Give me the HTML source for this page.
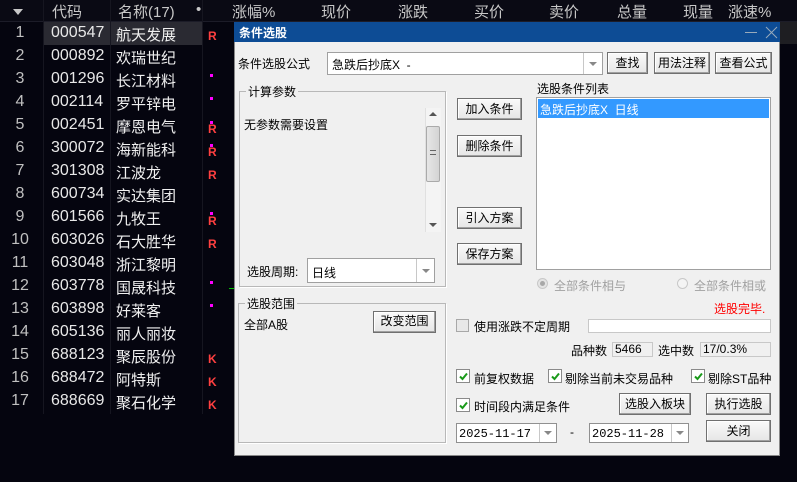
<!DOCTYPE html>
<html><head><meta charset="utf-8">
<style>
*{margin:0;padding:0;box-sizing:border-box}
body{width:797px;height:482px;background:#05050f;position:relative;overflow:hidden;font-family:"Liberation Sans","Noto Sans CJK SC",sans-serif;}
.a{position:absolute;white-space:nowrap}
.hd{color:#c8c8c8;font-size:15px;top:1px}
.rn{color:#c0c0c0;font-size:16px;width:40px;text-align:center;left:0}
.cd{color:#e8e8e8;font-size:16px;left:51px}
.nm{color:#f0f0f0;font-size:15px;left:116px}
.R{color:#ff4040;font-weight:bold;font-size:12px;left:208px}
.m{width:3px;height:3px;background:#ff00ff;left:210px}
.dl{font-size:12px;color:#000}
.btn{position:absolute;background:linear-gradient(#fafafa,#e6e6e6);border:1px solid #707070;box-shadow:inset -1px -1px 0 #a0a0a0,inset 1px 1px 0 #fff;font-size:12px;text-align:center;color:#000}
.box{position:absolute;background:#fff;border:1px solid #a0a0a0}
.arr{position:absolute;top:0;bottom:0;right:0;border-left:1px solid #c8c8c8;background:#fff}
.arr:after{content:"";position:absolute;left:50%;top:50%;margin:-2px 0 0 -4px;border:4px solid transparent;border-top:4px solid #888;border-bottom:0}
.grp{position:absolute;border:1px solid #b8b8b8;box-shadow:1px 1px 0 #fff}
.gl{position:absolute;background:#f0f0f0;font-size:12px;padding:0 2px;top:-9px;left:6px}
.cb{position:absolute;width:14px;height:14px;border:1px solid #8a8a8a;background:#fff}
.cb svg{position:absolute;left:2px;top:2px}
</style></head><body>
<div class="a" style="left:0;top:0;width:797px;height:22px;background:#0a0a14;border-bottom:1px solid #1c1c28"></div>
<div class="a" style="left:13px;top:9px;border:5px solid transparent;border-top:6px solid #c8c8c8;border-bottom:0"></div>
<div class="a hd" style="left:52px">代码</div>
<div class="a hd" style="left:118px">名称(17)</div>
<div class="a hd" style="left:196px">•</div>
<div class="a hd" style="left:232px">涨幅%</div>
<div class="a hd" style="left:321px">现价</div>
<div class="a hd" style="left:398px">涨跌</div>
<div class="a hd" style="left:474px">买价</div>
<div class="a hd" style="left:549px">卖价</div>
<div class="a hd" style="left:617px">总量</div>
<div class="a hd" style="left:683px">现量</div>
<div class="a hd" style="left:728px">涨速%</div>
<div class="a" style="left:44px;top:22px;width:66px;height:23px;background:#2a2a32"></div>
<div class="a" style="left:111px;top:22px;width:91px;height:23px;background:#2a2a32"></div>
<div class="a" style="left:43px;top:0;width:1px;height:414px;background:#161620"></div>
<div class="a" style="left:110px;top:0;width:1px;height:414px;background:#161620"></div>
<div class="a" style="left:202px;top:0;width:1px;height:414px;background:#161620"></div>

<div class="a rn" style="top:24px">1</div><div class="a cd" style="top:24px">000547</div><div class="a nm" style="top:24px">航天发展</div>
<div class="a rn" style="top:47px">2</div><div class="a cd" style="top:47px">000892</div><div class="a nm" style="top:47px">欢瑞世纪</div>
<div class="a rn" style="top:70px">3</div><div class="a cd" style="top:70px">001296</div><div class="a nm" style="top:70px">长江材料</div>
<div class="a rn" style="top:93px">4</div><div class="a cd" style="top:93px">002114</div><div class="a nm" style="top:93px">罗平锌电</div>
<div class="a rn" style="top:116px">5</div><div class="a cd" style="top:116px">002451</div><div class="a nm" style="top:116px">摩恩电气</div>
<div class="a rn" style="top:139px">6</div><div class="a cd" style="top:139px">300072</div><div class="a nm" style="top:139px">海新能科</div>
<div class="a rn" style="top:162px">7</div><div class="a cd" style="top:162px">301308</div><div class="a nm" style="top:162px">江波龙</div>
<div class="a rn" style="top:185px">8</div><div class="a cd" style="top:185px">600734</div><div class="a nm" style="top:185px">实达集团</div>
<div class="a rn" style="top:208px">9</div><div class="a cd" style="top:208px">601566</div><div class="a nm" style="top:208px">九牧王</div>
<div class="a rn" style="top:231px">10</div><div class="a cd" style="top:231px">603026</div><div class="a nm" style="top:231px">石大胜华</div>
<div class="a rn" style="top:254px">11</div><div class="a cd" style="top:254px">603048</div><div class="a nm" style="top:254px">浙江黎明</div>
<div class="a rn" style="top:277px">12</div><div class="a cd" style="top:277px">603778</div><div class="a nm" style="top:277px">国晟科技</div>
<div class="a rn" style="top:300px">13</div><div class="a cd" style="top:300px">603898</div><div class="a nm" style="top:300px">好莱客</div>
<div class="a rn" style="top:323px">14</div><div class="a cd" style="top:323px">605136</div><div class="a nm" style="top:323px">丽人丽妆</div>
<div class="a rn" style="top:346px">15</div><div class="a cd" style="top:346px">688123</div><div class="a nm" style="top:346px">聚辰股份</div>
<div class="a rn" style="top:369px">16</div><div class="a cd" style="top:369px">688472</div><div class="a nm" style="top:369px">阿特斯</div>
<div class="a rn" style="top:392px">17</div><div class="a cd" style="top:392px">688669</div><div class="a nm" style="top:392px">聚石化学</div>

<div class="a R" style="top:29px">R</div>
<div class="a m" style="top:74px"></div>
<div class="a m" style="top:97px"></div>
<div class="a m" style="top:121px"></div><div class="a R" style="top:122px">R</div>
<div class="a m" style="top:144px"></div><div class="a R" style="top:145px">R</div>
<div class="a R" style="top:168px">R</div>
<div class="a m" style="top:212px"></div><div class="a R" style="top:214px">R</div>
<div class="a R" style="top:237px">R</div>
<div class="a m" style="top:281px"></div>
<div class="a m" style="top:304px"></div>
<div class="a R" style="top:352px">K</div>
<div class="a R" style="top:375px">K</div>
<div class="a R" style="top:398px">K</div>
<div class="a" style="left:229px;top:288px;width:5px;height:1px;background:#00c000"></div>

<!-- dialog -->
<div class="a" style="left:779px;top:22px;width:18px;height:22px;background:#1e1e22"></div>
<div class="a" style="left:234px;top:22px;width:546px;height:434px;background:#f0f0f0;border:1px solid #888"></div>
<div class="a" style="left:234px;top:22px;width:546px;height:20px;background:#0d4c95"></div>
<div class="a" style="left:239px;top:24px;color:#fff;font-size:12px;font-weight:bold">条件选股</div>
<div class="a" style="left:745px;top:32px;width:12px;height:1px;background:#9ab"></div>
<svg class="a" style="left:765px;top:26px" width="13" height="13"><path d="M1 1L12 12M12 1L1 12" stroke="#9ab" stroke-width="1"/></svg>

<div class="a dl" style="left:238px;top:55px">条件选股公式</div>
<div class="box" style="left:327px;top:52px;width:276px;height:23px"><span class="a dl" style="left:4px;top:3px">急跌后抄底X&nbsp;&nbsp;-</span><div class="arr" style="width:19px"></div></div>
<div class="btn" style="left:607px;top:52px;width:41px;height:22px;line-height:20px">查找</div>
<div class="btn" style="left:654px;top:52px;width:56px;height:22px;line-height:20px">用法注释</div>
<div class="btn" style="left:715px;top:52px;width:57px;height:22px;line-height:20px">查看公式</div>

<div class="grp" style="left:239px;top:91px;width:207px;height:196px"><div class="gl">计算参数</div></div>
<div class="a dl" style="left:244px;top:116px">无参数需要设置</div>
<div class="a" style="left:425px;top:108px;width:16px;height:124px;background:#f4f4f4;border-left:1px solid #e0e0e0"></div>
<div class="a" style="left:429px;top:112px;border:4px solid transparent;border-bottom:4px solid #555;border-top:0"></div>
<div class="a" style="left:429px;top:223px;border:4px solid transparent;border-top:4px solid #555;border-bottom:0"></div>
<div class="a" style="left:426px;top:126px;width:14px;height:56px;background:linear-gradient(90deg,#e6e6e6,#d4d4d4);border:1px solid #aaa;border-radius:2px"></div>
<div class="a" style="left:430px;top:150px;width:6px;height:5px;border-top:1px solid #666;border-bottom:1px solid #666"></div>
<div class="a dl" style="left:247px;top:263px">选股周期:</div>
<div class="box" style="left:307px;top:258px;width:128px;height:25px"><span class="a dl" style="left:4px;top:5px">日线</span><div class="arr" style="width:18px"></div></div>

<div class="grp" style="left:238px;top:303px;width:208px;height:140px"><div class="gl">选股范围</div></div>
<div class="a dl" style="left:244px;top:316px">全部A股</div>
<div class="btn" style="left:373px;top:311px;width:63px;height:22px;line-height:19px">改变范围</div>

<div class="btn" style="left:457px;top:98px;width:65px;height:22px;line-height:20px">加入条件</div>
<div class="btn" style="left:457px;top:135px;width:65px;height:22px;line-height:20px">删除条件</div>
<div class="btn" style="left:457px;top:207px;width:65px;height:22px;line-height:20px">引入方案</div>
<div class="btn" style="left:457px;top:243px;width:65px;height:22px;line-height:20px">保存方案</div>

<div class="a dl" style="left:537px;top:80px">选股条件列表</div>
<div class="box" style="left:536px;top:97px;width:235px;height:173px;border-color:#a0a0a0"></div>
<div class="a" style="left:538px;top:99px;width:231px;height:19px;background:#3399ff;color:#fff;font-size:12px;padding:2px 0 0 2px">急跌后抄底X&nbsp;&nbsp;日线</div>

<div class="a" style="left:537px;top:278px;width:11px;height:11px;border-radius:50%;background:#e4e4e4;border:1px solid #c8c8c8"></div>
<div class="a" style="left:540px;top:281px;width:5px;height:5px;border-radius:50%;background:#a8a8a8"></div>
<div class="a" style="left:554px;top:277px;font-size:12px;color:#a0a0a0">全部条件相与</div>
<div class="a" style="left:677px;top:278px;width:11px;height:11px;border-radius:50%;background:#f4f4f4;border:1px solid #c8c8c8"></div>
<div class="a" style="left:694px;top:277px;font-size:12px;color:#a0a0a0">全部条件相或</div>
<div class="a" style="left:714px;top:300px;font-size:12px;color:#ff0000">选股完毕.</div>

<div class="a" style="left:456px;top:319px;width:13px;height:13px;border:1px solid #a8a8a8;background:#e8e8e8"></div>
<div class="a dl" style="left:474px;top:318px">使用涨跌不定周期</div>
<div class="a" style="left:588px;top:319px;width:183px;height:14px;background:#fff;border:1px solid #c8c8c8"></div>
<div class="a dl" style="left:571px;top:342px">品种数</div>
<div class="a" style="left:612px;top:342px;width:41px;height:15px;background:#f0f0f0;border:1px solid #c8c8c8;font-size:12px;padding-left:2px;line-height:13px">5466</div>
<div class="a dl" style="left:658px;top:342px">选中数</div>
<div class="a" style="left:700px;top:342px;width:71px;height:15px;background:#f0f0f0;border:1px solid #c8c8c8;font-size:12px;padding-left:2px;line-height:13px">17/0.3%</div>

<div class="cb" style="left:456px;top:369px"><svg width="9" height="9"><path d="M1 4.5L3.5 7L8 1.5" stroke="#1a9a1a" stroke-width="2" fill="none"/></svg></div><div class="a dl" style="left:474px;top:370px">前复权数据</div>
<div class="cb" style="left:548px;top:369px"><svg width="9" height="9"><path d="M1 4.5L3.5 7L8 1.5" stroke="#1a9a1a" stroke-width="2" fill="none"/></svg></div><div class="a dl" style="left:565px;top:370px">剔除当前未交易品种</div>
<div class="cb" style="left:691px;top:369px"><svg width="9" height="9"><path d="M1 4.5L3.5 7L8 1.5" stroke="#1a9a1a" stroke-width="2" fill="none"/></svg></div><div class="a dl" style="left:708px;top:370px">剔除ST品种</div>
<div class="cb" style="left:456px;top:398px"><svg width="9" height="9"><path d="M1 4.5L3.5 7L8 1.5" stroke="#1a9a1a" stroke-width="2" fill="none"/></svg></div><div class="a dl" style="left:474px;top:398px">时间段内满足条件</div>
<div class="btn" style="left:619px;top:393px;width:72px;height:22px;line-height:20px">选股入板块</div>
<div class="btn" style="left:706px;top:393px;width:65px;height:22px;line-height:20px">执行选股</div>
<div class="box" style="left:456px;top:423px;width:101px;height:20px;border-color:#909090"><span class="a" style="left:2px;top:3px;font-size:12px;font-family:'Liberation Mono',monospace">2025-11-17</span><div class="arr" style="width:17px"></div></div>
<div class="a dl" style="left:570px;top:425px">-</div>
<div class="box" style="left:589px;top:423px;width:100px;height:20px;border-color:#909090"><span class="a" style="left:2px;top:3px;font-size:12px;font-family:'Liberation Mono',monospace">2025-11-28</span><div class="arr" style="width:17px"></div></div>
<div class="btn" style="left:706px;top:420px;width:65px;height:22px;line-height:20px">关闭</div>
</body></html>
